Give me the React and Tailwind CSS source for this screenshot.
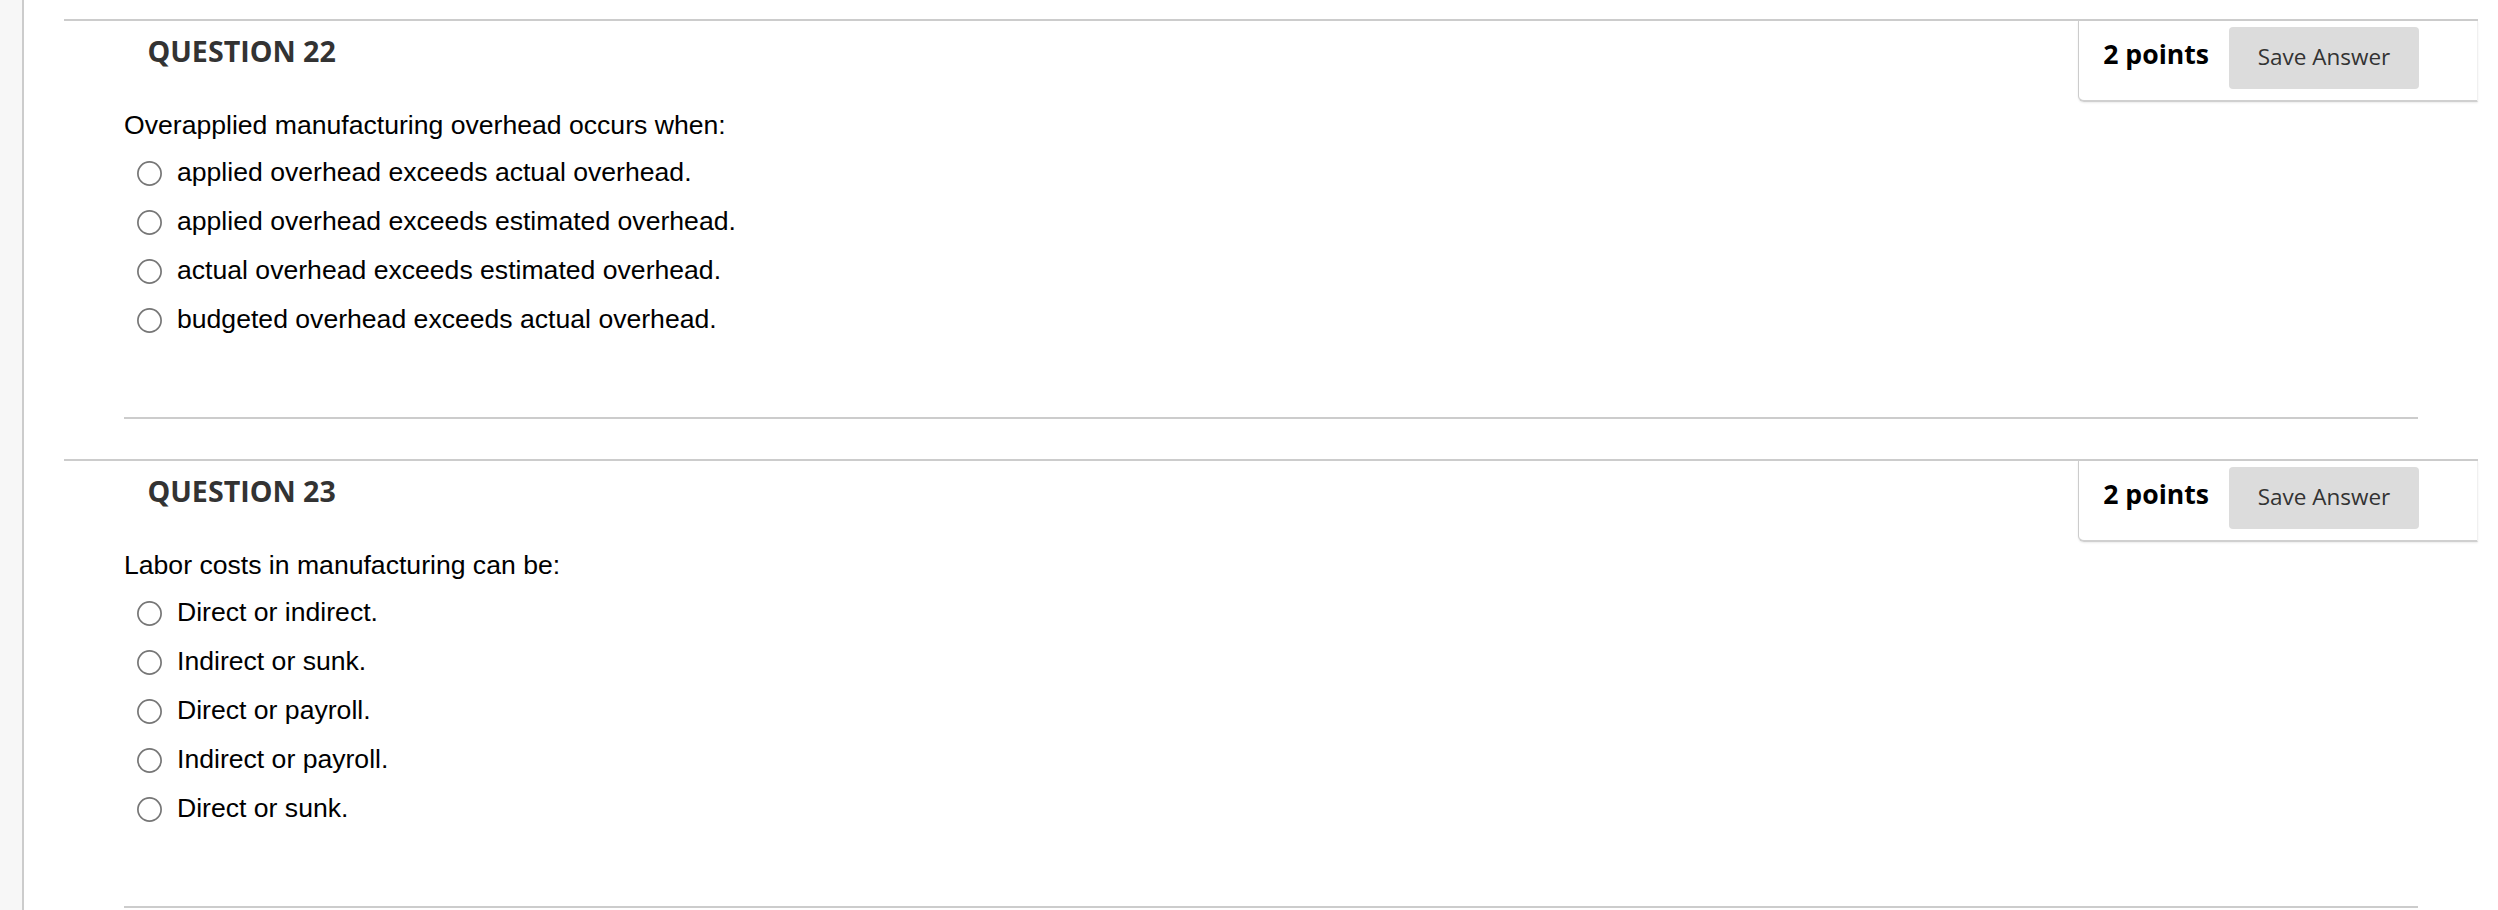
import React from "react";

const questions = [
  {
    n: 22,
    text: "Overapplied manufacturing overhead occurs when:",
    options: [
      "applied overhead exceeds actual overhead.",
      "applied overhead exceeds estimated overhead.",
      "actual overhead exceeds estimated overhead.",
      "budgeted overhead exceeds actual overhead.",
    ],
  },
  {
    n: 23,
    text: "Labor costs in manufacturing can be:",
    options: [
      "Direct or indirect.",
      "Indirect or sunk.",
      "Direct or payroll.",
      "Indirect or payroll.",
      "Direct or sunk.",
    ],
  },
];

function Radio() {
  return (
    <svg width="25" height="25" viewBox="0 0 25 25" className="shrink-0 mt-[12px]">
      <circle cx="12.5" cy="12.5" r="11.6" fill="#fff" stroke="#767676" strokeWidth="1.7" />
    </svg>
  );
}

function Question({ q, first }) {
  return (
    <section className={`border-t-2 border-[#cccccc] ${first ? "" : "mt-[40px]"}`}>
      <div className="flex items-start justify-between">
        <h3 className="ml-[83.5px] mt-[10px] text-[28.6px] leading-[39px] font-bold text-[#333333] font-['Open_Sans',sans-serif]">
          QUESTION {q.n}
        </h3>
        <div className="flex items-start h-[81px] pt-[6px] pl-[24px] pr-[58px] border-l border-r border-r-[#f0f0f0] border-l-[#cccccc] border-b-2 border-b-[#d0d0d0] rounded-bl-[6px] shadow-[0_1px_2px_rgba(0,0,0,0.08)] font-['Open_Sans',sans-serif]">
          <span className="mt-[9px] text-[26.6px] leading-[36px] font-bold text-black whitespace-nowrap">
            2 points
          </span>
          <button className="ml-[20px] w-[190px] h-[62px] rounded-[4px] bg-[#dcdcdc] text-[#333333] text-[22.5px] leading-[30px] flex items-center justify-center pb-[2px] whitespace-nowrap">
            Save Answer
          </button>
        </div>
      </div>
      <div className="px-[60px] font-['Liberation_Sans',Arial,sans-serif] text-black">
        <p className="mt-[8px] text-[26.6px] leading-[30px]">{q.text}</p>
        <ul className="mt-[9px]">
          {q.options.map((o) => (
            <li key={o} className="flex items-start h-[49px] pl-[13px]">
              <Radio />
              <span className="ml-[15px] text-[26.6px] leading-[30px] pt-[8px] whitespace-nowrap">
                {o}
              </span>
            </li>
          ))}
        </ul>
        <div className="mt-[72px] border-t-2 border-[#cccccc]" />
      </div>
    </section>
  );
}

export default function App() {
  return (
    <div className="flex min-h-screen bg-white">
      <div className="w-[24px] shrink-0 bg-[#f7f7f7] border-r-2 border-[#cccccc]" />
      <div className="ml-[40px] w-[2414px] pt-[19px]">
        {questions.map((q, i) => (
          <Question key={q.n} q={q} first={i === 0} />
        ))}
      </div>
    </div>
  );
}
